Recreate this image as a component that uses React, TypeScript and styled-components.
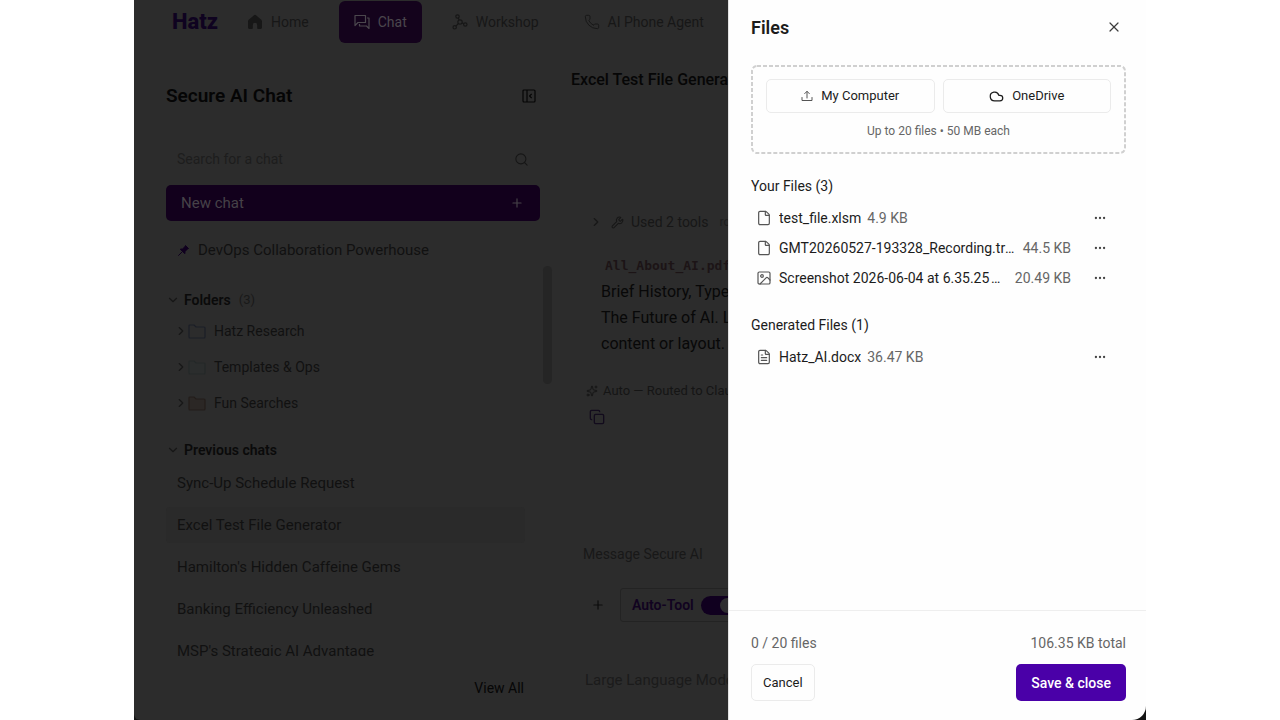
import React from "react";
import styled, { createGlobalStyle, css } from "styled-components";
import {
  ChevronDown,
  ChevronRight,
  Cloud,
  Copy,
  Ellipsis,
  File,
  FileText,
  Image as ImageIcon,
  Phone,
  Plus,
  Search,
  Sparkles,
  Wrench,
  X,
} from "lucide-react";

const GlobalStyle = createGlobalStyle`
  *, *::before, *::after { box-sizing: border-box; }
  body {
    margin: 0;
    background: #ffffff;
    font-family: Roboto, "Liberation Sans", sans-serif;
    font-size: 14px;
    line-height: 20px;
  }
  button, input, textarea { font: inherit; color: inherit; }
  button { margin: 0; padding: 0; border: 0; background: none; cursor: pointer; }
  h1, h2, h3, p, ul { margin: 0; padding: 0; font-weight: inherit; font-size: inherit; }
  ul { list-style: none; }
  a { color: inherit; text-decoration: none; }
  svg { display: block; flex: none; }
`;

/* ---------- shell ---------- */

const Stage = styled.div`
  height: 100vh;
  padding: 0 134px;
`;

const Window = styled.div`
  display: flex;
  height: 100%;
  background: #141414;
`;

const Backdrop = styled.div`
  flex: 1;
  min-width: 0;
  display: flex;
  flex-direction: column;
  overflow: hidden;
  background: #2c2c2c;
  color: #111111;
  white-space: nowrap;
  border-bottom-left-radius: 6px;
`;

/* ---------- top navigation ---------- */

const TopBar = styled.header`
  display: flex;
  align-items: center;
  gap: 15px;
  padding: 1px 0 1px 38px;
`;

const Logo = styled.a`
  width: 45px;
  font-size: 22px;
  line-height: 28px;
  font-weight: 800;
  color: #0f0320;
`;

const Nav = styled.nav`
  display: flex;
  gap: 15px;
`;

const NavLink = styled.a<{ $active?: boolean }>`
  display: flex;
  align-items: center;
  gap: 8px;
  height: 42px;
  padding: 0 15px;
  border-radius: 6px;
  color: #171717;
  ${(p) =>
    p.$active &&
    css`
      background: #14031c;
      color: #4b474d;
    `}
`;

/* ---------- sidebar ---------- */

const Columns = styled.div`
  flex: 1;
  min-height: 0;
  display: flex;
`;

const Sidebar = styled.aside`
  flex: none;
  width: 429px;
  display: flex;
  flex-direction: column;
  padding: 36px 0 0 32px;
`;

const SidebarTop = styled.div`
  display: flex;
  flex-direction: column;
  gap: 8px;
  padding-right: 23px;
`;

const SidebarTitle = styled.div`
  display: flex;
  align-items: center;
  justify-content: space-between;
  height: 32px;
  margin-bottom: 21px;
  padding-right: 4px;
  color: #050505;

  h1 {
    font-size: 19px;
    font-weight: 600;
  }
`;

const SearchBox = styled.label`
  display: flex;
  align-items: center;
  height: 36px;
  padding: 0 11px;
  color: #161616;
`;

const SearchInput = styled.input`
  flex: 1;
  min-width: 0;
  padding: 0;
  border: 0;
  outline: 0;
  background: none;

  &::placeholder {
    color: #1d1d1d;
    opacity: 1;
  }
`;

const NewChat = styled.button`
  display: flex;
  align-items: center;
  justify-content: space-between;
  height: 36px;
  padding: 0 16px 0 15px;
  border-radius: 5px;
  background: #12001c;
  color: #464248;
  font-size: 15px;
`;

const ListArea = styled.div`
  flex: 1;
  min-height: 0;
  display: flex;
  gap: 18px;
  margin-top: 8px;
  padding-right: 11px;
  overflow: hidden;
`;

const List = styled.div`
  flex: 1;
  min-width: 0;
`;

const ScrollThumb = styled.div`
  width: 9px;
  height: 118px;
  margin-top: 37px;
  border-radius: 5px;
  background: #252525;
`;

const PinnedRow = styled.a`
  display: flex;
  align-items: center;
  gap: 8px;
  height: 42px;
  padding-left: 11px;
  font-size: 15px;
`;

const SectionButton = styled.button`
  display: flex;
  align-items: center;
  gap: 4px;
  height: 26px;
  margin-top: 16px;
  color: #0a0a0a;

  strong {
    font-weight: 600;
  }
  span {
    margin-left: 4px;
    font-size: 13px;
    color: #191919;
  }
`;

const FolderRow = styled.li`
  display: flex;
  align-items: center;
  height: 36px;
  padding-left: 8px;

  a {
    margin-left: 8px;
  }
`;

const ChatList = styled.ul`
  display: flex;
  flex-direction: column;
  gap: 6px;
  padding-top: 2px;
`;

const ChatItem = styled.li<{ $active?: boolean }>`
  height: 36px;
  padding-left: 11px;
  border-radius: 4px;
  font-size: 15px;
  line-height: 36px;
  background: ${(p) => (p.$active ? "#2a2a2a" : "transparent")};
`;

const SidebarFoot = styled.div`
  display: flex;
  align-items: center;
  justify-content: flex-end;
  height: 64px;
  padding: 0 39px 0 0;
  color: #060606;
`;

/* ---------- conversation ---------- */

const Conversation = styled.main`
  flex: 1;
  min-width: 0;
  display: flex;
  flex-direction: column;
  overflow: hidden;
  padding: 24px 0 30px 8px;
`;

const ConversationTitle = styled.h2`
  font-size: 16px;
  line-height: 24px;
  font-weight: 500;
  color: #060606;
`;

const ToolsUsed = styled.div`
  display: flex;
  align-items: center;
  margin: 120px 0 20px 18px;
  color: #171717;

  svg + svg {
    margin: 0 7px 0 8px;
  }
  small {
    margin-left: 11px;
    font-size: 12px;
    color: #1f1f1f;
  }
`;

const Message = styled.p`
  margin-left: 30px;
  font-size: 16px;
  line-height: 26px;
  color: #080808;

  code {
    padding: 0 4px;
    font-family: "DejaVu Sans Mono", monospace;
    font-size: 13px;
    font-weight: 700;
    color: #1c1416;
  }
`;

const Routed = styled.div`
  display: flex;
  align-items: center;
  gap: 5px;
  margin: 24px 0 8px 15px;
  font-size: 13px;
  color: #151515;
`;

const CopyButton = styled.button`
  align-self: flex-start;
  margin-left: 18px;
  color: #120b1c;
`;

const Composer = styled.form`
  margin-top: auto;
  padding: 0 0 12px 12px;
  color: #151515;
`;

const MessageBox = styled.textarea`
  display: block;
  width: 100%;
  height: 44px;
  padding: 0;
  border: 0;
  outline: 0;
  resize: none;
  overflow: hidden;
  background: none;

  &::placeholder {
    color: #181818;
    opacity: 1;
  }
`;

const ComposerTools = styled.div`
  display: flex;
  align-items: center;
  gap: 15px;
  padding-left: 8px;
`;

const AutoTool = styled.label`
  flex: none;
  display: flex;
  align-items: center;
  gap: 7px;
  height: 34px;
  padding: 0 11px;
  border: 1px solid #232323;
  border-radius: 3px;
  font-weight: 600;
  color: #110320;
`;

const Switch = styled.input`
  appearance: none;
  display: flex;
  align-items: center;
  justify-content: flex-end;
  width: 36px;
  height: 19px;
  margin: 0;
  padding: 2px;
  border-radius: 10px;
  background: #10001f;

  &::after {
    content: "";
    width: 15px;
    height: 15px;
    border-radius: 50%;
    background: #2e2d30;
  }
`;

const Disclaimer = styled.p`
  margin: 36px 0 0 14px;
  font-size: 15px;
  color: #1b1b1b;
`;

/* ---------- files drawer ---------- */

const Drawer = styled.section`
  flex: none;
  width: 418px;
  display: flex;
  flex-direction: column;
  border-left: 1px solid #e2e2e2;
  border-bottom-right-radius: 14px;
  background: #fefefe;
  color: #1c1c1c;
`;

const DrawerHead = styled.header`
  display: flex;
  align-items: flex-start;
  justify-content: space-between;
  padding: 16px 24px 0 22px;

  h2 {
    font-size: 18px;
    line-height: 24px;
    font-weight: 600;
  }
`;

const CloseButton = styled.button`
  padding: 3px 0;
  color: #3c3c3c;
`;

const DrawerBody = styled.div`
  flex: 1;
  min-height: 0;
  padding: 25px 20px 0 22px;
`;

const DropZone = styled.div`
  position: relative;
  display: flex;
  flex-wrap: wrap;
  gap: 8px;
  padding: 14px 15px 13px;

  p {
    width: 100%;
    text-align: center;
    font-size: 12px;
    color: #666666;
  }
`;

const DashedOutline = styled.svg`
  position: absolute;
  inset: 0;
  width: 100%;
  height: 100%;
  overflow: visible;
  pointer-events: none;

  rect {
    x: 1px;
    y: 1px;
    width: calc(100% - 2px);
    height: calc(100% - 2px);
    fill: none;
    stroke: #d0d0d0;
    stroke-width: 2px;
    stroke-dasharray: 4 2;
  }
`;

const SourceButton = styled.button`
  flex: 1;
  display: flex;
  align-items: center;
  justify-content: center;
  gap: 8px;
  height: 34px;
  border: 1px solid #ebebeb;
  border-radius: 5px;
  font-size: 13px;
`;

const FilesHeading = styled.h3`
  margin-top: 22px;
  padding-bottom: 7px;
`;

const FileRow = styled.li`
  display: flex;
  align-items: center;
  height: 30px;
  padding: 0 19px 0 5px;
  color: #555555;
`;

const FileLabel = styled.div`
  flex: 1;
  min-width: 0;
  display: flex;
  gap: 6px;
  margin: 0 22px 0 7px;
  white-space: nowrap;
`;

const FileName = styled.span`
  overflow: hidden;
  text-overflow: ellipsis;
  color: #1c1c1c;
`;

const FileSize = styled.span`
  flex: none;
  color: #666666;
`;

const DrawerFoot = styled.footer`
  padding: 22px 20px 19px 22px;
  border-top: 1px solid #eeeeee;
`;

const FootRow = styled.div`
  display: flex;
  justify-content: space-between;
  color: #666666;

  & + & {
    margin-top: 11px;
  }
`;

const ActionButton = styled.button<{ $primary?: boolean }>`
  height: 37px;
  border-radius: 5px;
  ${(p) =>
    p.$primary
      ? css`
          padding: 0 15px;
          background: #4a00a8;
          color: #ffffff;
          font-weight: 500;
        `
      : css`
          padding: 0 11px;
          border: 1px solid #ebebeb;
          color: #1c1c1c;
          font-size: 13px;
        `}
`;

/* ---------- drawings ---------- */

const HomeIcon = () => (
  <svg width="16" height="16" viewBox="0 0 16 16" fill="currentColor">
    <path d="M7 1.2a1.6 1.6 0 0 1 2 0l5.3 4.5c.4.4.7.9.7 1.5v6.3c0 .9-.7 1.5-1.5 1.5H11c-.5 0-.8-.4-.8-.8V11a2.2 2.2 0 0 0-4.4 0v3.2c0 .4-.3.8-.8.8H2.5C1.7 15 1 14.4 1 13.5V7.2c0-.6.3-1.1.7-1.5z" />
  </svg>
);

const ChatIcon = () => (
  <svg width="16" height="16" viewBox="0 0 16 16" fill="none" stroke="currentColor" strokeWidth="1.2" strokeLinejoin="round">
    <path d="M1 1.500h10.500v7H4L1 11.500z" />
    <path d="M13 4h2v10.500L12.500 12H5.500v-2" />
  </svg>
);

const WorkshopIcon = () => (
  <svg width="16" height="16" viewBox="0 0 16 16" fill="none" stroke="currentColor" strokeWidth="1.2">
    <circle cx="5.5" cy="2.5" r="1.7" />
    <circle cx="8" cy="8" r="2.2" />
    <circle cx="2.7" cy="13.3" r="1.7" />
    <circle cx="13.3" cy="10.5" r="1.7" />
    <path d="M6.200 4l.9 2M6.400 9.500l-2.500 2.600M10.100 8.800l1.600.9" />
  </svg>
);

const PanelIcon = () => (
  <svg width="14" height="14" viewBox="0 0 14 14" fill="none" stroke="currentColor" strokeWidth="1.2" strokeLinejoin="round">
    <rect x="1" y="1" width="12" height="12" rx="1" />
    <path d="M5 1v12M9.700 4.800L7.600 7l2.100 2.200" />
  </svg>
);

const PinIcon = () => (
  <svg width="13" height="13" viewBox="0 0 13 13" fill="#10001f" stroke="#10001f" strokeWidth="1" strokeLinejoin="round">
    <path d="M8.500 1.500l3 3-1 .4-2.400 2.500-.3 2.300L3.300 5.200l2.300-.3 2.500-2.400z" />
    <path d="M5.300 7.700L1.300 11.700" />
  </svg>
);

const FolderIcon = ({ line, fill }: { line: string; fill: string }) => (
  <svg width="18" height="15" viewBox="0 0 18 15" fill={fill} stroke={line} strokeWidth="1.2">
    <path d="M1 2a1 1 0 0 1 1-1h4l2 2h8a1 1 0 0 1 1 1v9a1 1 0 0 1-1 1H2a1 1 0 0 1-1-1z" />
  </svg>
);

const UploadIcon = () => (
  <svg width="12" height="12" viewBox="0 0 12 12" fill="none" stroke="#555555" strokeWidth="1" strokeLinecap="round" strokeLinejoin="round">
    <path d="M6 8V1.500M3.700 3.600L6 1.300l2.300 2.300M1 7.500v3h10v-3" />
  </svg>
);

/* ---------- data ---------- */

const folders = [
  { name: "Hatz Research", line: "#1b1e27", fill: "none" },
  { name: "Templates & Ops", line: "#242828", fill: "#2b2d2d" },
  { name: "Fun Searches", line: "#231d1a", fill: "#2b2725" },
];

const chats = [
  "Sync-Up Schedule Request",
  "Excel Test File Generator",
  "Hamilton's Hidden Caffeine Gems",
  "Banking Efficiency Unleashed",
  "MSP's Strategic AI Advantage",
];

type Entry = { name: string; size: string; icon: React.ElementType };

const yourFiles: Entry[] = [
  { name: "test_file.xlsm", size: "4.9 KB", icon: File },
  { name: "GMT20260527-193328_Recording.transcript.vtt", size: "44.5 KB", icon: File },
  { name: "Screenshot 2026-06-04 at 6.35.25\u202fPM.png", size: "20.49 KB", icon: ImageIcon },
];

const generatedFiles: Entry[] = [{ name: "Hatz_AI.docx", size: "36.47 KB", icon: FileText }];

const FileList = ({ files }: { files: Entry[] }) => (
  <ul>
    {files.map(({ name, size, icon: Icon }) => (
      <FileRow key={name}>
        <Icon size={16} strokeWidth={1.8} />
        <FileLabel>
          <FileName>{name}</FileName>
          <FileSize>{size}</FileSize>
        </FileLabel>
        <button type="button" aria-label={`Options for ${name}`}>
          <Ellipsis size={14} color="#444444" />
        </button>
      </FileRow>
    ))}
  </ul>
);

export default function App() {
  return (
    <Stage>
      <GlobalStyle />
      <Window>
        <Backdrop>
          <TopBar>
            <Logo href="#">Hatz</Logo>
            <Nav>
              <NavLink href="#home">
                <HomeIcon />
                Home
              </NavLink>
              <NavLink href="#chat" $active>
                <ChatIcon />
                Chat
              </NavLink>
              <NavLink href="#workshop">
                <WorkshopIcon />
                Workshop
              </NavLink>
              <NavLink href="#phone">
                <Phone size={16} strokeWidth={1.5} />
                AI Phone Agent
              </NavLink>
            </Nav>
          </TopBar>

          <Columns>
            <Sidebar>
              <SidebarTop>
                <SidebarTitle>
                  <h1>Secure AI Chat</h1>
                  <button type="button" aria-label="Collapse sidebar">
                    <PanelIcon />
                  </button>
                </SidebarTitle>
                <SearchBox>
                  <SearchInput type="search" placeholder="Search for a chat" aria-label="Search for a chat" />
                  <Search size={15} strokeWidth={1.7} />
                </SearchBox>
                <NewChat type="button">
                  New chat
                  <Plus size={14} />
                </NewChat>
              </SidebarTop>

              <ListArea>
                <List>
                  <PinnedRow href="#pinned">
                    <PinIcon />
                    DevOps Collaboration Powerhouse
                  </PinnedRow>
                  <SectionButton type="button">
                    <ChevronDown size={14} color="#171717" />
                    <strong>Folders</strong>
                    <span>(3)</span>
                  </SectionButton>
                  <ul>
                    {folders.map((f) => (
                      <FolderRow key={f.name}>
                        <ChevronRight size={14} color="#171717" />
                        <FolderIcon line={f.line} fill={f.fill} />
                        <a href="#folder">{f.name}</a>
                      </FolderRow>
                    ))}
                  </ul>
                  <SectionButton type="button">
                    <ChevronDown size={14} color="#171717" />
                    <strong>Previous chats</strong>
                  </SectionButton>
                  <ChatList>
                    {chats.map((c, i) => (
                      <ChatItem key={c} $active={i === 1}>
                        <a href="#chat">{c}</a>
                      </ChatItem>
                    ))}
                  </ChatList>
                </List>
                <ScrollThumb />
              </ListArea>

              <SidebarFoot>
                <a href="#all">View All</a>
              </SidebarFoot>
            </Sidebar>

            <Conversation>
              <ConversationTitle>Excel Test File Generator</ConversationTitle>
              <ToolsUsed>
                <ChevronRight size={14} />
                <Wrench size={13} />
                Used 2 tools
                <small>ro</small>
              </ToolsUsed>
              <Message>
                <code>All_About_AI.pdf</code>
                <br />
                Brief History, Types
                <br />
                The Future of AI. L
                <br />
                content or layout.
              </Message>
              <Routed>
                <Sparkles size={12} />
                Auto — Routed to Claude
              </Routed>
              <CopyButton type="button" aria-label="Copy">
                <Copy size={16} />
              </CopyButton>
              <Composer>
                <MessageBox placeholder="Message Secure AI" aria-label="Message" />
                <ComposerTools>
                  <button type="button" aria-label="Attach">
                    <Plus size={14} color="#0c0c0c" />
                  </button>
                  <AutoTool>
                    Auto-Tool
                    <Switch type="checkbox" role="switch" defaultChecked />
                  </AutoTool>
                </ComposerTools>
              </Composer>
              <Disclaimer>Large Language Models</Disclaimer>
            </Conversation>
          </Columns>
        </Backdrop>

        <Drawer role="dialog" aria-label="Files">
          <DrawerHead>
            <h2>Files</h2>
            <CloseButton type="button" aria-label="Close">
              <X size={16} strokeWidth={1.8} />
            </CloseButton>
          </DrawerHead>
          <DrawerBody>
            <DropZone>
              <DashedOutline aria-hidden="true">
                <rect rx="5" />
              </DashedOutline>
              <SourceButton type="button">
                <UploadIcon />
                My Computer
              </SourceButton>
              <SourceButton type="button">
                <Cloud size={15} />
                OneDrive
              </SourceButton>
              <p>Up to 20 files • 50 MB each</p>
            </DropZone>
            <FilesHeading>Your Files (3)</FilesHeading>
            <FileList files={yourFiles} />
            <FilesHeading>Generated Files (1)</FilesHeading>
            <FileList files={generatedFiles} />
          </DrawerBody>
          <DrawerFoot>
            <FootRow>
              <span>0 / 20 files</span>
              <span>106.35 KB total</span>
            </FootRow>
            <FootRow>
              <ActionButton type="button">Cancel</ActionButton>
              <ActionButton type="button" $primary>
                Save &amp; close
              </ActionButton>
            </FootRow>
          </DrawerFoot>
        </Drawer>
      </Window>
    </Stage>
  );
}
